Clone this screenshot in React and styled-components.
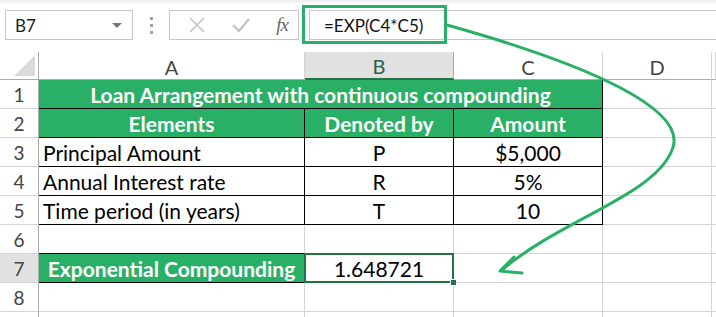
import React from 'react';
import styled, { createGlobalStyle } from 'styled-components';

const GREEN = '#2ab066';
const SEL = '#217346';
const GRID = '#d4d4d4';
const FONT = `Lato, "Open Sans", "Liberation Sans", sans-serif`;
const COLS = '39px 266px 149px 149px 109px 1fr';

const Global = createGlobalStyle`
  html, body { margin: 0; padding: 0; background: #fff; }
  body { font-family: ${FONT}; }
`;

const Sheet = styled.div`
  position: relative;
  width: 716px;
  height: 317px;
  overflow: hidden;
  background: #fff;
`;

const FormulaBar = styled.div`
  display: flex;
  align-items: center;
  height: 50px;
  padding-left: 5px;
  box-sizing: border-box;
  background: linear-gradient(#ececec 0px, #fff 4px);
`;

const Box = styled.div`
  box-sizing: border-box;
  height: 30px;
  border: 1px solid #c6c6c6;
  display: flex;
  align-items: center;
  background: #fff;
`;

const NameBox = styled(Box)`
  width: 128px;
  justify-content: space-between;
  padding: 0 10px 0 9px;
  font-size: 17px;
  color: #222;
`;

const Caret = styled.span`
  width: 0;
  height: 0;
  border-left: 5px solid transparent;
  border-right: 5px solid transparent;
  border-top: 5px solid #777;
`;

const Dots = styled.div`
  margin-left: 17px;
  display: flex;
  flex-direction: column;
  gap: 4px;
  & > span { width: 3px; height: 3px; background: #a0a0a0; display: block; }
`;

const FxBox = styled(Box)`
  margin-left: 16px;
  width: 130px;
  justify-content: space-between;
  padding: 0 10px 0 18px;
`;

const FormulaInput = styled(Box)`
  margin-left: 10px;
  flex: 1;
  border-right: none;
  padding-left: 14px;
  font-size: 17px;
  color: #111;
`;

const Highlight = styled.div`
  position: absolute;
  left: 302px;
  top: 5px;
  width: 145px;
  height: 39px;
  box-sizing: border-box;
  border: 3px solid ${GREEN};
`;

const Grid = styled.div`
  margin-top: 2px;
`;

const Row = styled.div`
  display: grid;
  grid-template-columns: ${COLS};
  height: ${(p) => (p.$head ? 28 : 29)}px;
`;

const HeadCell = styled.div`
  box-sizing: border-box;
  position: relative;
  border-right: 1px solid ${(p) => (p.$sel ? '#ababab' : GRID)};
  border-bottom: ${(p) => (p.$sel ? `2px solid ${SEL}` : '1px solid #ababab')};
  background: ${(p) => (p.$sel ? '#e1e1e1' : '#fff')};
  color: ${(p) => (p.$sel ? '#2b5f4b' : '#444')};
  font-size: 20px;
  display: flex;
  align-items: center;
  justify-content: center;
  padding-top: 2px;
`;

const Corner = styled(HeadCell)`
  border-right-color: #ababab;
  &::after {
    content: '';
    position: absolute;
    right: 3px;
    bottom: 3px;
    width: 0;
    height: 0;
    border-left: 21px solid transparent;
    border-bottom: 21px solid #dadada;
  }
`;

const RowHead = styled.div`
  box-sizing: border-box;
  border-right: 1px solid #ababab;
  border-bottom: 1px solid ${GRID};
  background: ${(p) => (p.$sel ? '#e1e1e1' : '#fff')};
  color: #444;
  font-size: 19px;
  display: flex;
  align-items: center;
  justify-content: center;
`;

const Cell = styled.div`
  box-sizing: border-box;
  position: relative;
  grid-column: span ${(p) => p.$span || 1};
  border-right: 1px solid ${(p) => (p.$line ? '#000' : GRID)};
  border-bottom: 1px solid ${(p) => (p.$line || p.$bline ? '#000' : GRID)};
  background: ${(p) => p.$bg || 'transparent'};
  color: ${(p) => p.$fg || '#000'};
  font-weight: ${(p) => (p.$bold ? 700 : 400)};
  font-size: 21px;
  display: flex;
  align-items: center;
  justify-content: ${(p) => (p.$left ? 'flex-start' : 'center')};
  padding: 0 4px;
  white-space: nowrap;
  &::after {
    content: '';
    display: ${(p) => (p.$selected ? 'block' : 'none')};
    position: absolute;
    left: -1px;
    top: -1px;
    right: -1px;
    bottom: -1px;
    border: 2px solid ${SEL};
  }
`;

const Handle = styled.span`
  position: absolute;
  right: -4px;
  bottom: -4px;
  width: 5px;
  height: 5px;
  background: ${SEL};
  border: 1px solid #fff;
  z-index: 2;
`;

const Overlay = styled.svg`
  position: absolute;
  left: 0;
  top: 0;
  pointer-events: none;
`;

const XIcon = () => (
  <svg width="18" height="18" viewBox="0 0 18 18">
    <path d="M2 2 L16 16 M16 2 L2 16" stroke="#c4c4c4" strokeWidth="1.6" fill="none" />
  </svg>
);
const CheckIcon = () => (
  <svg width="20" height="18" viewBox="0 0 20 18">
    <path d="M2 9 L8 15 L18 3" stroke="#c4c4c4" strokeWidth="2.4" fill="none" />
  </svg>
);
const Fx = styled.span`
  font-family: "Liberation Serif", serif;
  font-style: italic;
  font-size: 19px;
  color: #666;
  letter-spacing: -1px;
`;

const cols = ['A', 'B', 'C', 'D', ''];

const EmptyCells = ({ n }) =>
  Array.from({ length: n }, (_, i) => <Cell key={i} />);

export default function App() {
  return (
    <Sheet>
      <Global />
      <FormulaBar>
        <NameBox>
          <span>B7</span>
          <Caret />
        </NameBox>
        <Dots>
          <span />
          <span />
          <span />
        </Dots>
        <FxBox>
          <XIcon />
          <CheckIcon />
          <Fx>fx</Fx>
        </FxBox>
        <FormulaInput>=EXP(C4*C5)</FormulaInput>
      </FormulaBar>
      <Grid>
        <Row $head>
          <Corner />
          {cols.map((c) => (
            <HeadCell key={c || 'e'} $sel={c === 'B'}>{c}</HeadCell>
          ))}
        </Row>
        <Row>
          <RowHead>1</RowHead>
          <Cell $span={3} $line $bg={GREEN} $fg="#fff" $bold>
            Loan Arrangement with continuous compounding
          </Cell>
          <EmptyCells n={2} />
        </Row>
        <Row>
          <RowHead>2</RowHead>
          <Cell $line $bg={GREEN} $fg="#fff" $bold>Elements</Cell>
          <Cell $line $bg={GREEN} $fg="#fff" $bold>Denoted by</Cell>
          <Cell $line $bg={GREEN} $fg="#fff" $bold>Amount</Cell>
          <EmptyCells n={2} />
        </Row>
        <Row>
          <RowHead>3</RowHead>
          <Cell $line $left>Principal Amount</Cell>
          <Cell $line>P</Cell>
          <Cell $line>$5,000</Cell>
          <EmptyCells n={2} />
        </Row>
        <Row>
          <RowHead>4</RowHead>
          <Cell $line $left>Annual Interest rate</Cell>
          <Cell $line>R</Cell>
          <Cell $line>5%</Cell>
          <EmptyCells n={2} />
        </Row>
        <Row>
          <RowHead>5</RowHead>
          <Cell $line $left>Time period (in years)</Cell>
          <Cell $line>T</Cell>
          <Cell $line>10</Cell>
          <EmptyCells n={2} />
        </Row>
        <Row>
          <RowHead>6</RowHead>
          <Cell $bline />
          <EmptyCells n={4} />
        </Row>
        <Row>
          <RowHead $sel>7</RowHead>
          <Cell $line $bg={GREEN} $fg="#fff" $bold>Exponential Compounding</Cell>
          <Cell $selected>
            1.648721
            <Handle />
          </Cell>
          <EmptyCells n={3} />
        </Row>
        <Row>
          <RowHead>8</RowHead>
          <EmptyCells n={5} />
        </Row>
        <Row>
          <RowHead />
          <EmptyCells n={5} />
        </Row>
      </Grid>
      <Highlight />
      <Overlay width="716" height="317" viewBox="0 0 716 317">
        <path
          d="M447 25 C 590 65, 690 110, 672 150 C 655 195, 560 220, 502 270"
          stroke={GREEN}
          strokeWidth="3"
          fill="none"
          strokeLinecap="round"
        />
        <path
          d="M514 257 L500 271 L522 273"
          stroke={GREEN}
          strokeWidth="3"
          fill="none"
          strokeLinejoin="round"
          strokeLinecap="round"
        />
      </Overlay>
    </Sheet>
  );
}
